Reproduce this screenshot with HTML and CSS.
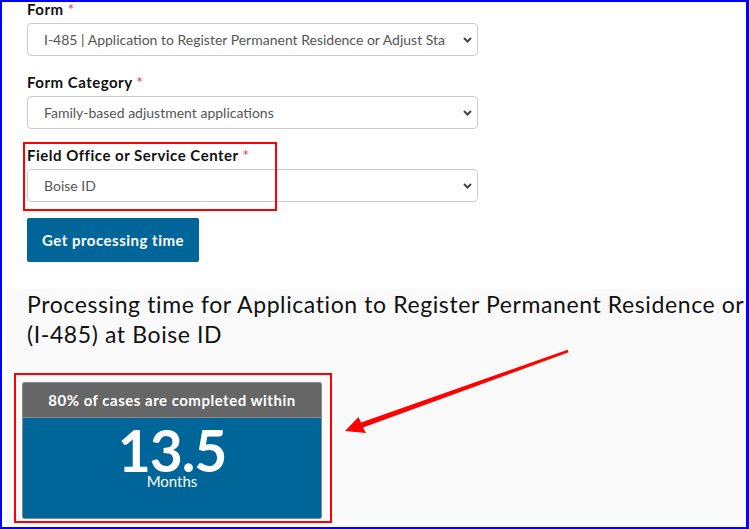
FILE: index.html
```html
<!DOCTYPE html>
<html lang="en">
<head>
<meta charset="utf-8">
<title>Processing time</title>
<link rel="stylesheet" href="styles.css">
</head>
<body>
<div class="frame">
  <div class="form">
    <div class="field">
      <div class="label">Form <span class="req">*</span></div>
      <div class="select">
        <span class="select-text">I-485 | Application to Register Permanent Residence or Adjust Status</span>
        <svg class="chev" width="9" height="6" viewBox="0 0 9 6"><path d="M1 1 L4.5 4.5 L8 1" fill="none" stroke="#444" stroke-width="2"/></svg>
      </div>
    </div>
    <div class="field">
      <div class="label">Form Category <span class="req">*</span></div>
      <div class="select">
        <span class="select-text">Family-based adjustment applications</span>
        <svg class="chev" width="9" height="6" viewBox="0 0 9 6"><path d="M1 1 L4.5 4.5 L8 1" fill="none" stroke="#444" stroke-width="2"/></svg>
      </div>
    </div>
    <div class="field">
      <div class="label">Field Office or Service Center <span class="req">*</span></div>
      <div class="select">
        <span class="select-text">Boise ID</span>
        <svg class="chev" width="9" height="6" viewBox="0 0 9 6"><path d="M1 1 L4.5 4.5 L8 1" fill="none" stroke="#444" stroke-width="2"/></svg>
      </div>
    </div>
    <button class="btn" type="button">Get processing time</button>
  </div>

  <section class="result">
    <h2 class="result-title"><span class="line">Processing time for Application to Register Permanent Residence or Adjust Status</span><br><span class="line">(I-485) at Boise ID</span></h2>
    <div class="card">
      <div class="card-head">80% of cases are completed within</div>
      <div class="card-body">
        <div class="num">13.5</div>
        <div class="unit">Months</div>
      </div>
    </div>
  </section>

  <svg class="annot" width="749" height="529" viewBox="0 0 749 529">
    <rect x="24" y="143" width="252" height="67" fill="none" stroke="#ff0000" stroke-width="2"/>
    <rect x="15" y="374" width="316" height="148" fill="none" stroke="#ff0000" stroke-width="2"/>
    <polygon points="345,431 358.5,417 361,422.4 567.6,349.8 568.6,352.2 363,427.6 366,433" fill="#ff0000"/>
  </svg>
</div>
</body>
</html>
```

FILE: styles.css
```css
html, body {
  margin: 0;
  padding: 0;
  background: #ffffff;
}

.frame {
  position: relative;
  width: 749px;
  height: 529px;
  box-sizing: border-box;
  border: 2px solid #0000ff;
  border-right-width: 3px;
  overflow: hidden;
  background: #ffffff;
  font-family: Lato, "Liberation Sans", sans-serif;
  color: #000;
}

.form {
  padding: 0 0 0 25px;
  width: 451px;
  margin-top: -3px;
}

.field {
  margin-bottom: 16px;
}

.label {
  font-size: 15px;
  font-weight: 700;
  letter-spacing: 0.5px;
  line-height: 20px;
  margin-bottom: 4px;
  color: #111;
}

.req {
  color: #e0393e;
  font-weight: 400;
  letter-spacing: 0;
}

.select {
  display: flex;
  align-items: center;
  height: 33px;
  box-sizing: border-box;
  border: 1px solid #cccccc;
  border-radius: 4px;
  background: #fff;
  padding: 0 5px 0 16px;
}

.select-text {
  flex: 1;
  overflow: hidden;
  white-space: nowrap;
  font-size: 14px;
  color: #555555;
  margin-right: 17px;
}

.chev {
  display: block;
  flex: none;
}

.btn {
  display: block;
  margin-top: 16px;
  width: 172px;
  height: 44px;
  border: none;
  border-radius: 2px;
  background: #006699;
  color: #ffffff;
  font-family: Lato, "Liberation Sans", sans-serif;
  font-size: 15px;
  font-weight: 700;
  letter-spacing: 0.5px;
  padding: 0;
}

.result {
  margin: 30px 0 0 5px;
  background: #fafafa;
  padding: 0 0 20px 20px;
  height: 300px;
}

.result-title {
  margin: -3px 0 0 0;
  font-size: 23px;
  font-weight: 400;
  letter-spacing: 0.6px;
  line-height: 30px;
  color: #111;
}

.line {
  white-space: nowrap;
}

.card {
  margin: 33px 0 0 -5px;
  width: 300px;
  box-sizing: border-box;
  border: 1px solid #8a8a8a;
  border-radius: 2px;
  overflow: hidden;
}

.card-head {
  height: 34px;
  background: #666666;
  color: #ffffff;
  font-size: 15px;
  font-weight: 700;
  letter-spacing: 0.5px;
  line-height: 34px;
  text-align: center;
  border-bottom: 1px solid #888;
}

.card-body {
  height: 100px;
  background: #006699;
  color: #ffffff;
  text-align: center;
}

.num {
  font-size: 57px;
  font-weight: 700;
  line-height: 44px;
  padding-top: 10px;
  letter-spacing: -1px;
}

.unit {
  font-size: 15px;
  line-height: 18px;
  margin-top: 0;
}

.annot {
  position: absolute;
  left: -2px;
  top: -2px;
  pointer-events: none;
}
```
